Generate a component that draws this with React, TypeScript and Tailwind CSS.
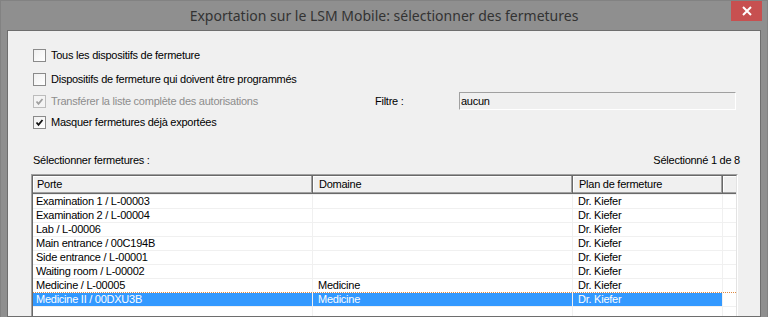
import React from "react";

const rows: { p: string; d: string; f: string; sel?: boolean }[] = [
  { p: "Examination 1 / L-00003", d: "", f: "Dr. Kiefer" },
  { p: "Examination 2 / L-00004", d: "", f: "Dr. Kiefer" },
  { p: "Lab / L-00006", d: "", f: "Dr. Kiefer" },
  { p: "Main entrance / 00C194B", d: "", f: "Dr. Kiefer" },
  { p: "Side entrance / L-00001", d: "", f: "Dr. Kiefer" },
  { p: "Waiting room / L-00002", d: "", f: "Dr. Kiefer" },
  { p: "Medicine / L-00005", d: "Medicine", f: "Dr. Kiefer" },
  { p: "Medicine II / 00DXU3B", d: "Medicine", f: "Dr. Kiefer", sel: true },
];

function Box({ checked, disabled }: { checked?: boolean; disabled?: boolean }) {
  return (
    <div
      className={
        "w-[13px] h-[13px] shrink-0 border flex items-center justify-center " +
        (disabled ? "border-[#bcbcbc] bg-[#f4f4f4]" : "border-[#8a8a8a] bg-gradient-to-br from-[#f0f0f0] to-white")
      }
    >
      {checked && (
        <svg width="11" height="11" viewBox="0 0 11 11">
          <polyline
            points="2.5,5.5 4.5,7.8 8.5,3"
            fill="none"
            stroke={disabled ? "#a0a0a0" : "#111"}
            strokeWidth="1.8"
          />
        </svg>
      )}
    </div>
  );
}

function Check({ label, checked, disabled }: { label: string; checked?: boolean; disabled?: boolean }) {
  return (
    <div className="flex items-center gap-[5px]">
      <Box checked={checked} disabled={disabled} />
      <span className={disabled ? "text-[#8d8d8d]" : "text-black"}>{label}</span>
    </div>
  );
}

const widths = ["w-[280px]", "w-[260px]", "w-[150px]"];

export default function App() {
  return (
    <div className="w-[768px] h-[317px] overflow-hidden bg-[#8f8f8f] flex flex-col border-l border-t border-r border-[#828282]">
      <div className="grid grid-cols-[1fr_auto_1fr] h-[29px] shrink-0">
        <div />
        <div
          className="self-center text-[14px] text-[#333333] leading-[20px] pt-[1px]"
          style={{ fontFamily: '"Segoe UI", "Noto Sans", "Open Sans", sans-serif' }}
        >
          Exportation sur le LSM Mobile: sélectionner des fermetures
        </div>
        <div className="flex justify-end items-start">
          <div className="mr-[5px] w-[31px] h-[20px] bg-[#c75050] flex items-center justify-center">
            <svg width="10" height="10" viewBox="0 0 10 10">
              <path d="M1 1 L9 9 M9 1 L1 9" stroke="#fff" strokeWidth="2" />
            </svg>
          </div>
        </div>
      </div>
      <div
        className="flex-1 mx-[6px] border border-[#6e6e6e] bg-[#f0f0f0] flex flex-col text-[11px] leading-[13px] tracking-[-0.25px] text-black overflow-hidden"
        style={{ fontFamily: '"Liberation Sans", Arial, sans-serif' }}
      >
        <div className="shrink-0 mt-[16px] h-[17px] pl-[25px] flex items-center">
          <Check label="Tous les dispositifs de fermeture" />
        </div>
        <div className="shrink-0 mt-[7px] h-[17px] pl-[25px] flex items-center">
          <Check label="Dispositifs de fermeture qui doivent être programmés" />
        </div>
        <div className="shrink-0 mt-[4px] h-[18px] pl-[25px] flex items-center">
          <div className="w-[342px]">
            <Check label="Transférer la liste complète des autorisations" checked disabled />
          </div>
          <div className="w-[84px]">Filtre :</div>
          <div className="w-[277px] h-[18px] border-t border-l border-[#a0a0a0] border-b-white border-r-white border-b border-r">
            <div className="h-full pl-[1px] flex items-center bg-[#f0f0f0]">aucun</div>
          </div>
        </div>
        <div className="shrink-0 mt-[4px] h-[17px] pl-[25px] flex items-center">
          <Check label="Masquer fermetures déjà exportées" checked />
        </div>
        <div className="shrink-0 mt-[22px] h-[14px] pl-[25px] pr-[20px] flex items-center justify-between">
          <span>Sélectionner fermetures :</span>
          <span>Sélectionné 1 de 8</span>
        </div>
        <div className="shrink-0 mt-[7px] ml-[23px] w-[707px] h-[160px] border-t border-l border-[#a0a0a0] border-r-white border-b-white border-r border-b">
          <div className="h-full border-t border-l border-[#696969] border-r-[#e3e3e3] border-b-[#e3e3e3] border-r border-b bg-white">
            <div className="flex h-[18px] bg-[#f0f0f0]">
              {["Porte", "Domaine", "Plan de fermeture"].map((h, i) => (
                <div
                  key={h}
                  className={
                    widths[i] +
                    " h-full flex items-center pb-[2px] shadow-[inset_-1px_-1px_0_#696969,inset_-2px_-2px_0_#a0a0a0,inset_1px_1px_0_#ffffff] " +
                    (i === 0 ? "pl-[4px]" : "pl-[6px]")
                  }
                >
                  {h}
                </div>
              ))}
              <div className="flex-1 h-full shadow-[inset_0_-1px_0_#696969,inset_0_-2px_0_#a0a0a0,inset_1px_1px_0_#ffffff]" />
            </div>
            {rows.map((r) => (
              <div
                key={r.p}
                className={
                  "flex h-[14px] border-t " +
                  (r.sel ? "border-dotted border-[#e08a40]" : "border-[#f0f0f0]")
                }
              >
                {[r.p, r.d, r.f].map((c, i) => (
                  <div key={i} className={widths[i] + " h-full border-r border-[#f0f0f0] flex"}>
                    <div
                      className={
                        "flex-1 h-full flex items-center " +
                        (i === 0 ? "pl-[3px] " : "pl-[5px] ") +
                        (r.sel ? "bg-[#3399ff] text-white" : "")
                      }
                    >
                      {c}
                    </div>
                  </div>
                ))}
                <div className="flex-1 bg-white" />
              </div>
            ))}
            <div className="flex h-[30px] border-t border-[#f0f0f0]">
              {widths.map((w, i) => (
                <div key={i} className={w + " h-full border-r border-[#f0f0f0]"} />
              ))}
            </div>
          </div>
        </div>
      </div>
    </div>
  );
}
